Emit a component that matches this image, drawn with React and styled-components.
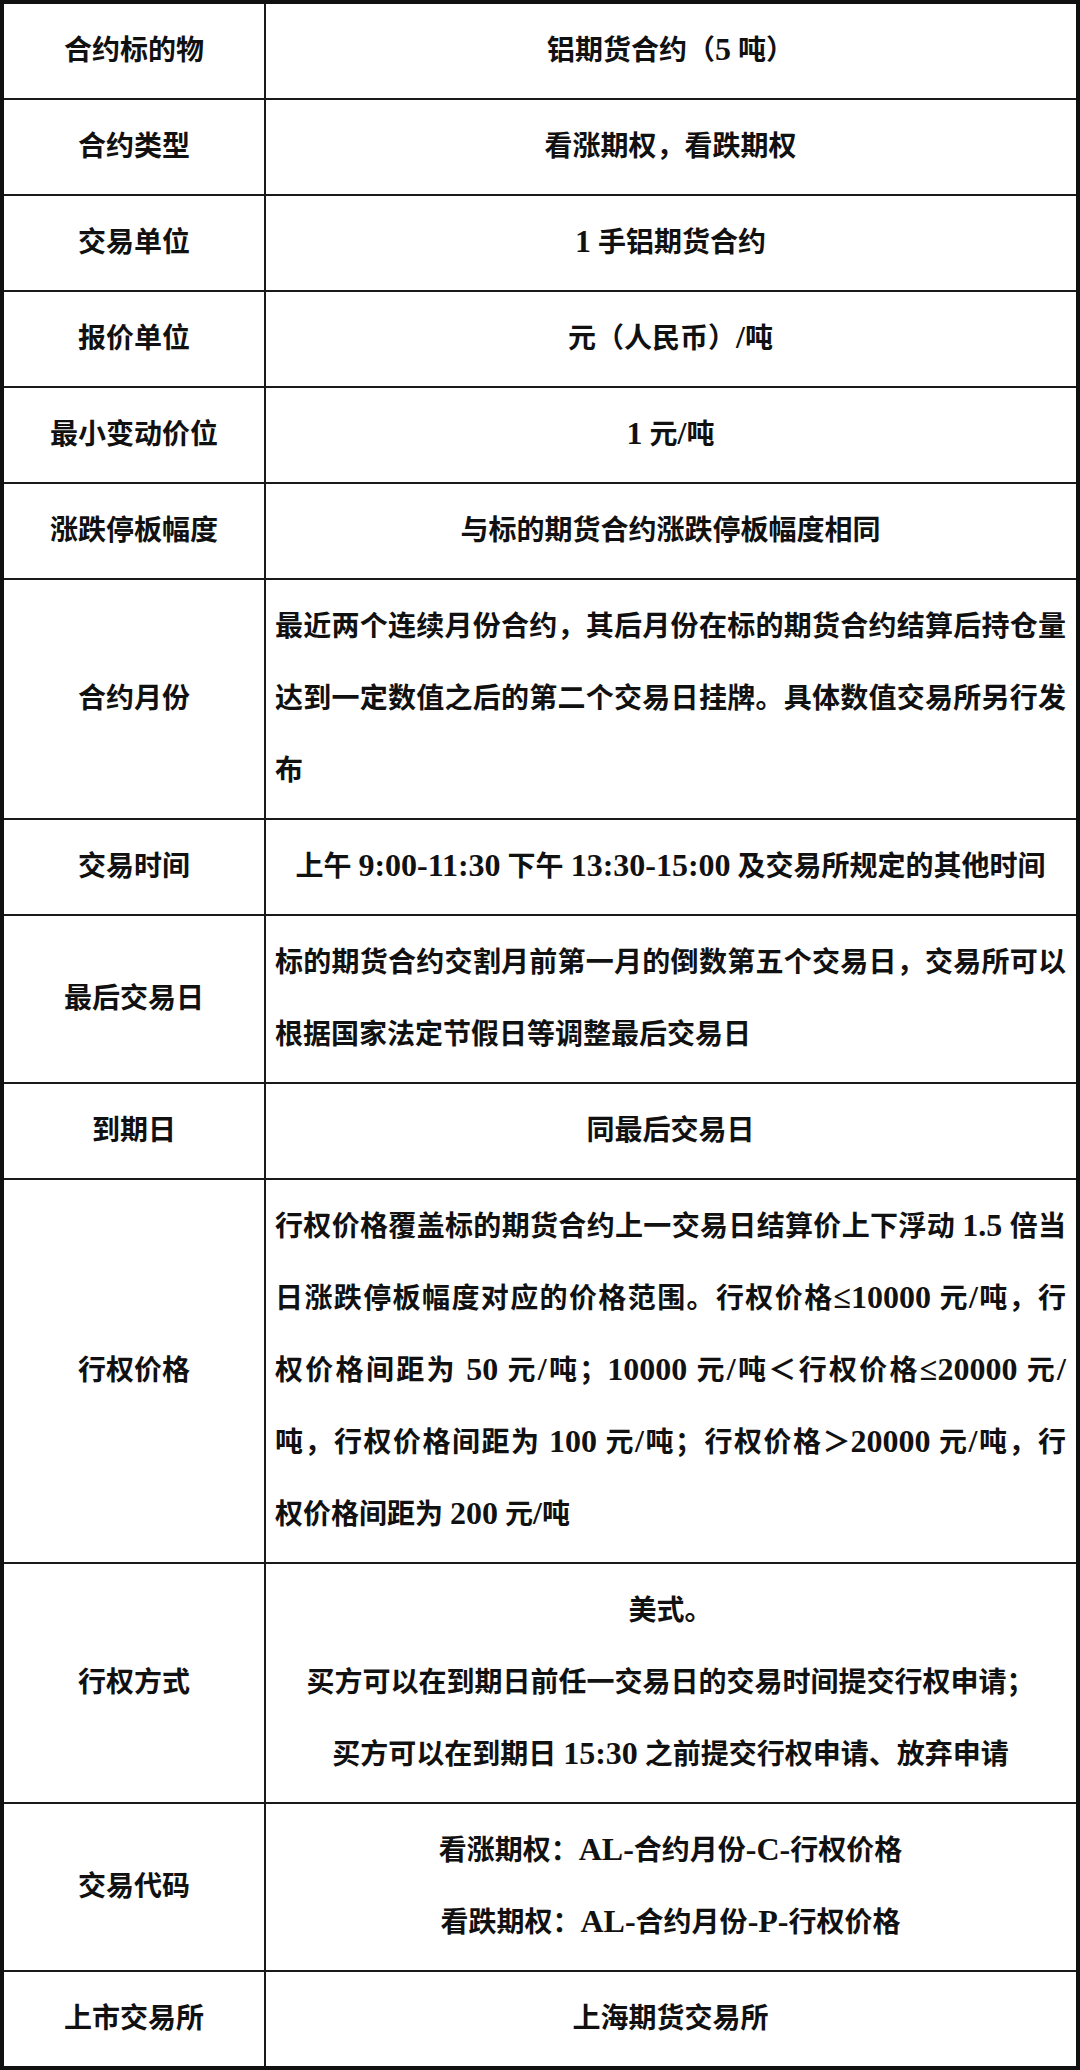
import styled, { createGlobalStyle } from 'styled-components';

const rows = [
    { label: '合约标的物', lines: ['铝期货合约（5 吨）'] },
    { label: '合约类型', lines: ['看涨期权，看跌期权'] },
    { label: '交易单位', lines: ['1 手铝期货合约'] },
    { label: '报价单位', lines: ['元（人民币）/吨'] },
    { label: '最小变动价位', lines: ['1  元/吨'] },
    { label: '涨跌停板幅度', lines: ['与标的期货合约涨跌停板幅度相同'] },
    {
        label: '合约月份',
        left: true,
        lines: [
            '最近两个连续月份合约，其后月份在标的期货合约结算后持仓量',
            '达到一定数值之后的第二个交易日挂牌。具体数值交易所另行发',
            '布',
        ],
    },
    { label: '交易时间', lines: ['上午 9:00-11:30 下午 13:30-15:00 及交易所规定的其他时间'] },
    {
        label: '最后交易日',
        left: true,
        lines: [
            '标的期货合约交割月前第一月的倒数第五个交易日，交易所可以',
            '根据国家法定节假日等调整最后交易日',
        ],
    },
    { label: '到期日', lines: ['同最后交易日'] },
    {
        label: '行权价格',
        left: true,
        lines: [
            '行权价格覆盖标的期货合约上一交易日结算价上下浮动 1.5 倍当',
            '日涨跌停板幅度对应的价格范围。行权价格≤10000 元/吨，行',
            '权价格间距为 50 元/吨；10000 元/吨＜行权价格≤20000 元/',
            '吨，行权价格间距为 100 元/吨；行权价格＞20000 元/吨，行',
            '权价格间距为 200 元/吨',
        ],
    },
    {
        label: '行权方式',
        lines: [
            '美式。',
            '买方可以在到期日前任一交易日的交易时间提交行权申请；',
            '买方可以在到期日 15:30 之前提交行权申请、放弃申请',
        ],
    },
    {
        label: '交易代码',
        lines: ['看涨期权：AL-合约月份-C-行权价格', '看跌期权：AL-合约月份-P-行权价格'],
    },
    { label: '上市交易所', lines: ['上海期货交易所'] },
];

// latin runs get the serif at a slightly bigger size, like the source doc
const withLatin = (text) =>
    text.split(/([A-Za-z0-9.:/≤\-]+)/).map((part, i) =>
        i % 2 ? <Latin key={i}>{part}</Latin> : part
    );

const App = () => {
    return (
        <>
            <GlobalStyle />
            <Table>
                <tbody>
                    {rows.map((row) => (
                        <tr key={row.label}>
                            <LabelCell>{row.label}</LabelCell>
                            <ValueCell>
                                {row.lines.map((line, i) => (
                                    <Line
                                        key={i}
                                        $left={row.left}
                                        $justify={row.left && i < row.lines.length - 1}
                                    >
                                        {withLatin(line)}
                                    </Line>
                                ))}
                            </ValueCell>
                        </tr>
                    ))}
                </tbody>
            </Table>
        </>
    );
};

export default App;

const GlobalStyle = createGlobalStyle`
    html, body {
        margin: 0;
        padding: 0;
        background: #ffffff;
    }
    body {
        font-family: "Liberation Serif", "Noto Sans CJK SC", serif;
        color: #111111;
    }
`;

const Table = styled.table`
    width: 1080px;
    border-collapse: collapse;
    border: 4px solid #111;
    table-layout: fixed;
    font-weight: 700;
    font-size: 28px;
`;

const LabelCell = styled.td`
    width: 260px;
    border: 2px solid #1a1a1a;
    padding: 11px 0;
    text-align: center;
    vertical-align: middle;
    line-height: 72px;
`;

const ValueCell = styled.td`
    border: 2px solid #1a1a1a;
    padding: 11px 10px 11px 9px;
    vertical-align: middle;
    line-height: 72px;
`;

const Line = styled.div`
    height: 72px;
    text-align: ${(p) => (p.$left ? 'justify' : 'center')};
    text-align-last: ${(p) => (p.$justify ? 'justify' : p.$left ? 'left' : 'center')};
    white-space: nowrap;
`;

const Latin = styled.span`
    font-family: "Liberation Serif", serif;
    font-size: 32px;
    line-height: 1;
`;
